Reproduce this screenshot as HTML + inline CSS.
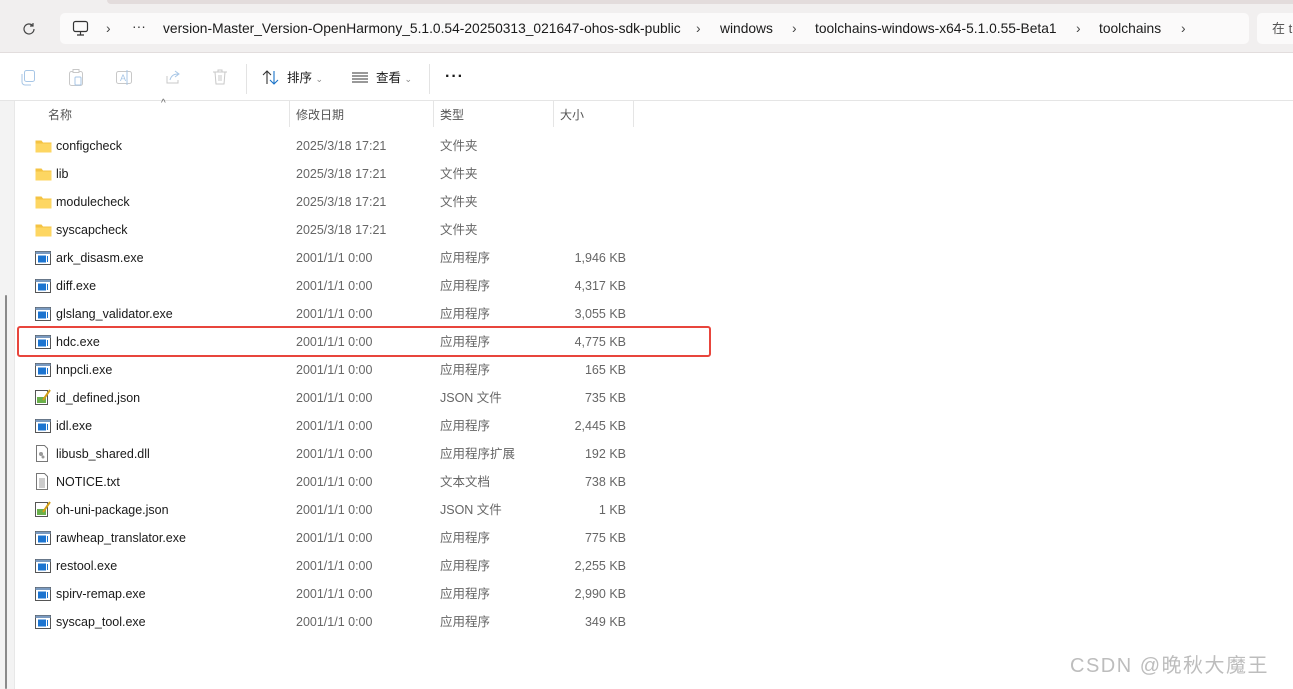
<!DOCTYPE html>
<html><head><meta charset="utf-8"><style>
*{margin:0;padding:0;box-sizing:border-box}
body{width:1293px;height:689px;overflow:hidden;background:#fff;font-family:"Segoe UI","Liberation Sans","Noto Sans CJK SC",sans-serif;position:relative;color:#1a1a1a}
.top{position:absolute;left:0;top:0;width:1293px;height:53px;background:#f1efef;border-bottom:1px solid #e2dddd}
.strip{position:absolute;left:107px;top:0;right:0;height:4px;background:#e3dcdc;border-radius:0 0 0 6px}
.addr{position:absolute;left:60px;top:13px;width:1189px;height:31px;background:#fbfafa;border-radius:5px}
.search{position:absolute;left:1257px;top:13px;width:60px;height:31px;background:#fbfafa;border-radius:5px;font-size:13px;line-height:31px;padding-left:15px;color:#555}
.t{position:absolute;font-size:13.8px;white-space:nowrap;line-height:20px}
.tb{position:absolute;top:54px;left:0;width:1293px;height:47px;border-bottom:1px solid #e5e5e5;background:#fff}
.sep{position:absolute;top:64px;width:1px;height:30px;background:#e3e3e3}
.pane{position:absolute;left:0;top:101px;width:15px;height:588px;background:#f3f3f3;border-right:1px solid #e8e8e8}
.sb{position:absolute;left:5px;top:295px;width:2px;height:394px;background:#8a8a8a;border-radius:1px}
.h{position:absolute;top:105px;font-size:12px;color:#555;line-height:20px}
.cs{position:absolute;top:101px;width:1px;height:26px;background:#e5e5e5}
.r{position:absolute;left:0;height:28px;width:700px;font-size:12.5px}
.r span{position:absolute;top:0;line-height:28px;white-space:nowrap}
.n{left:56px;color:#1a1a1a}
.d{left:296px;color:#666}
.ty{left:440px;color:#666}
.s{right:74px;color:#666;text-align:right}
.ic{position:absolute;left:35px;top:7px}
</style></head><body>
<div class="top"><div class="strip"></div>
<svg style="position:absolute;left:21px;top:21px" width="16" height="16" viewBox="0 0 16 16"><path d="M13 8a5 5 0 1 1-1.5-3.6M12 2v3h-3" fill="none" stroke="#444" stroke-width="1.2"/></svg>
<div class="addr"></div>
<svg style="position:absolute;left:72px;top:20px" width="17" height="17" viewBox="0 0 17 17"><rect x="1.5" y="1.5" width="14" height="10" rx="2" fill="none" stroke="#333" stroke-width="1.2"/><path d="M5 15h7M8.5 12v3" stroke="#333" stroke-width="1.2"/></svg>
<div class="t" style="left:106px;top:19px;color:#444">›</div>
<div class="t" style="left:132px;top:17px;color:#333">···</div>
<div class="t" style="left:163px;top:19px">version-Master_Version-OpenHarmony_5.1.0.54-20250313_021647-ohos-sdk-public</div>
<div class="t" style="left:696px;top:19px;color:#444">›</div>
<div class="t" style="left:720px;top:19px">windows</div>
<div class="t" style="left:792px;top:19px;color:#444">›</div>
<div class="t" style="left:815px;top:19px">toolchains-windows-x64-5.1.0.55-Beta1</div>
<div class="t" style="left:1076px;top:19px;color:#444">›</div>
<div class="t" style="left:1099px;top:19px">toolchains</div>
<div class="t" style="left:1181px;top:19px;color:#444">›</div>
<div class="search">在 t</div>
</div>
<div class="tb"></div>
<svg style="position:absolute;left:20px;top:69px" width="16" height="17" viewBox="0 0 16 17"><rect x="4.5" y="1.5" width="10" height="11" rx="2" fill="none" stroke="#a7c6e6"/><path d="M2 5v8a3 3 0 0 0 3 3h6" fill="none" stroke="#a7c6e6"/></svg>
<svg style="position:absolute;left:68px;top:68px" width="16" height="19" viewBox="0 0 16 19"><rect x="1.5" y="3.5" width="13" height="14" rx="2" fill="none" stroke="#c8c8c8"/><rect x="5" y="1.5" width="6" height="3" fill="#fff" stroke="#c8c8c8"/><rect x="7" y="9" width="6" height="8" rx="1" fill="none" stroke="#a7c6e6"/></svg>
<svg style="position:absolute;left:115px;top:69px" width="18" height="17" viewBox="0 0 18 17"><rect x="1.5" y="2.5" width="15" height="12" rx="2" fill="none" stroke="#c8c8c8"/><text x="5" y="12" font-size="9" fill="#a7c6e6" font-family="Liberation Sans">A</text><path d="M12 1v15" stroke="#a7c6e6"/></svg>
<svg style="position:absolute;left:164px;top:69px" width="18" height="17" viewBox="0 0 18 17"><path d="M3 7v7h11v-3" fill="none" stroke="#c8c8c8"/><path d="M6 11c1-4 4-6 8-6M11 2l4 3-4 3" fill="none" stroke="#a7c6e6"/></svg>
<svg style="position:absolute;left:212px;top:68px" width="16" height="18" viewBox="0 0 16 18"><path d="M1 4h14M6 4V2h4v2M3 4l1 12h8l1-12M7 7v6M9 7v6" fill="none" stroke="#c8c8c8"/></svg>
<div class="sep" style="left:246px"></div>
<svg style="position:absolute;left:262px;top:69px" width="18" height="17" viewBox="0 0 18 17"><path d="M5 15V2M1 6l4-4 4 4" fill="none" stroke="#333" stroke-width="1.1"/><path d="M12 2v13M8 11l4 4 4-4" fill="none" stroke="#1a73c8" stroke-width="1.1"/></svg>
<div class="t" style="left:287px;top:68px;font-size:12.5px">排序 <span style="font-size:9px;color:#888">⌄</span></div>
<svg style="position:absolute;left:352px;top:72px" width="16" height="11" viewBox="0 0 16 11"><path d="M0 1h16M0 4h16M0 7h16M0 10h16" stroke="#333" stroke-width="1"/></svg>
<div class="t" style="left:376px;top:68px;font-size:12.5px">查看 <span style="font-size:9px;color:#888">⌄</span></div>
<div class="sep" style="left:429px"></div>
<div class="t" style="left:445px;top:67px;font-size:16px;font-weight:bold;letter-spacing:1px">···</div>
<div class="pane"></div><div class="sb"></div>
<div class="t" style="left:161px;top:94px;font-size:10px;color:#666">^</div>
<div class="h" style="left:48px">名称</div>
<div class="h" style="left:296px">修改日期</div>
<div class="h" style="left:440px">类型</div>
<div class="h" style="left:560px">大小</div>
<div class="cs" style="left:289px"></div><div class="cs" style="left:433px"></div><div class="cs" style="left:553px"></div><div class="cs" style="left:633px"></div>
<div id="rows"></div>
<div style="position:absolute;left:17px;top:326px;width:694px;height:31px;border:2px solid #e8453c;border-radius:3px"></div>
<div class="t" style="left:1070px;top:653px;font-size:20px;line-height:26px;letter-spacing:1.5px;color:#bdbdbd">CSDN @晚秋大魔王</div>
<script>
const F='<svg class="ic" width="17" height="14" viewBox="0 0 17 14"><path d="M0.5 1.5h6l1.5 2h8.5v10h-16z" fill="#f4c343"/><path d="M0.5 4.5h16v9h-16z" fill="#fdd662"/></svg>';
const E='<svg class="ic" width="16" height="14" viewBox="0 0 16 14"><rect x="0.5" y="0.5" width="15" height="13" fill="#fff" stroke="#555"/><rect x="0.5" y="0.5" width="15" height="2.5" fill="#7a9ac0"/><rect x="3" y="4.5" width="8" height="7" fill="#1c74d0"/><path d="M12.5 5v6" stroke="#1c74d0"/></svg>';
const J='<svg class="ic" width="16" height="16" viewBox="0 0 16 16" style="top:5px"><rect x="0.5" y="1.5" width="12" height="14" fill="#fff" stroke="#555"/><rect x="2" y="8" width="9" height="6" fill="#6ab04c"/><path d="M15 1L8 11" stroke="#d4a017" stroke-width="2"/></svg>';
const D='<svg class="ic" width="14" height="17" viewBox="0 0 14 17" style="top:5px"><path d="M1.5 0.5h8l3 3v13h-11z" fill="#fff" stroke="#777"/><circle cx="6" cy="9" r="2" fill="#999"/><circle cx="8" cy="12" r="1.5" fill="#999"/></svg>';
const T='<svg class="ic" width="14" height="17" viewBox="0 0 14 17" style="top:5px"><path d="M1.5 0.5h8l3 3v13h-11z" fill="#fff" stroke="#777"/><path d="M4 6h6M4 8h6M4 10h6M4 12h6M4 14h6" stroke="#999"/></svg>';
const R=[[F,'configcheck','2025/3/18 17:21','文件夹',''],[F,'lib','2025/3/18 17:21','文件夹',''],[F,'modulecheck','2025/3/18 17:21','文件夹',''],[F,'syscapcheck','2025/3/18 17:21','文件夹',''],
[E,'ark_disasm.exe','2001/1/1 0:00','应用程序','1,946 KB'],[E,'diff.exe','2001/1/1 0:00','应用程序','4,317 KB'],[E,'glslang_validator.exe','2001/1/1 0:00','应用程序','3,055 KB'],[E,'hdc.exe','2001/1/1 0:00','应用程序','4,775 KB'],[E,'hnpcli.exe','2001/1/1 0:00','应用程序','165 KB'],[J,'id_defined.json','2001/1/1 0:00','JSON 文件','735 KB'],[E,'idl.exe','2001/1/1 0:00','应用程序','2,445 KB'],[D,'libusb_shared.dll','2001/1/1 0:00','应用程序扩展','192 KB'],[T,'NOTICE.txt','2001/1/1 0:00','文本文档','738 KB'],[J,'oh-uni-package.json','2001/1/1 0:00','JSON 文件','1 KB'],[E,'rawheap_translator.exe','2001/1/1 0:00','应用程序','775 KB'],[E,'restool.exe','2001/1/1 0:00','应用程序','2,255 KB'],[E,'spirv-remap.exe','2001/1/1 0:00','应用程序','2,990 KB'],[E,'syscap_tool.exe','2001/1/1 0:00','应用程序','349 KB']];
let h='';R.forEach((r,i)=>{h+=`<div class="r" style="top:${132+i*28}px">${r[0]}<span class="n">${r[1]}</span><span class="d">${r[2]}</span><span class="ty">${r[3]}</span><span class="s">${r[4]}</span></div>`});
document.getElementById('rows').innerHTML=h;
</script>
</body></html>
